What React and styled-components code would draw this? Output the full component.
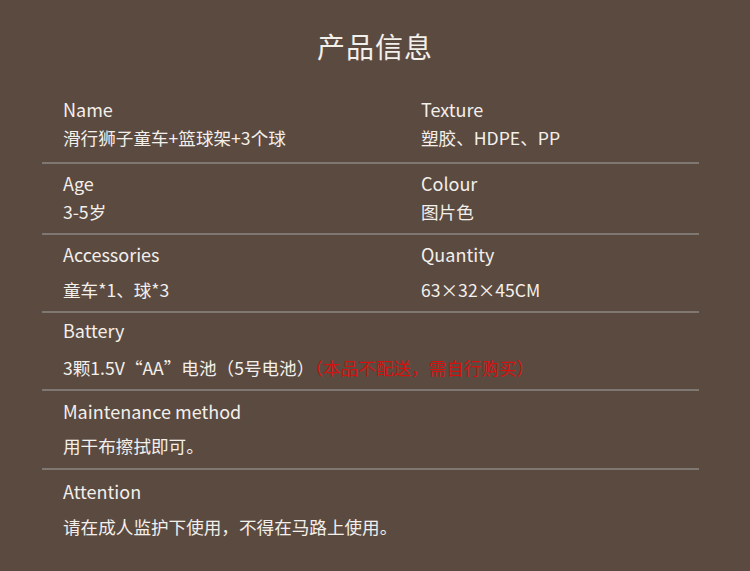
import React from 'react';
import styled, { createGlobalStyle } from 'styled-components';

const GlobalStyle = createGlobalStyle`
    html, body {
        margin: 0;
        padding: 0;
        background: #5b4a40;
    }
    body {
        font-family: "Noto Sans CJK SC", "Noto Sans", sans-serif;
        color: #f3efeb;
    }
`;

const Page = styled.div`
    width: 750px;
    height: 571px;
    overflow: hidden;
    background: #5b4a40;
    padding-top: 26px;
    box-sizing: border-box;
`;

const Title = styled.h1`
    margin: 0 0 22px;
    font-size: 28px;
    line-height: 40px;
    font-weight: 400;
    text-align: center;
    letter-spacing: 1px;
`;

const Table = styled.div`
    margin-left: 42px;
    width: 657px;
`;

const Row = styled.div`
    display: grid;
    grid-template-columns: 358px 1fr;
    padding: ${p => p.$pt}px 0 ${p => p.$pb}px 21px;
    border-top: ${p => (p.$first ? 'none' : '2px solid #7e7772')};
`;

const Cell = styled.div`
    display: flex;
    flex-direction: column;
    gap: ${p => p.$gap}px;
`;

const Label = styled.div`
    font-size: 18px;
    line-height: 24px;
`;

const Value = styled.div`
    font-size: 17.6px;
    line-height: 24px;
    white-space: nowrap;
`;

const Note = styled.span`
    color: #d3120e;
`;

const rows = [
    { pt: 9, pb: 12, gap: 5, cells: [['Name', '滑行狮子童车+篮球架+3个球'], ['Texture', '塑胶、HDPE、PP']] },
    { pt: 7, pb: 9, gap: 5, cells: [['Age', '3-5岁'], ['Colour', '图片色']] },
    { pt: 7, pb: 9, gap: 12, cells: [['Accessories', '童车*1、球*3'], ['Quantity', '63×32×45CM']] },
    {
        pt: 5,
        pb: 9,
        gap: 14,
        cells: [
            [
                'Battery',
                <>
                    3颗1.5V“AA”电池（5号电池）<Note>（本品不配送，需自行购买）</Note>
                </>,
            ],
        ],
    },
    { pt: 8, pb: 10, gap: 11, cells: [['Maintenance method', '用干布擦拭即可。']] },
    { pt: 9, pb: 10, gap: 12, cells: [['Attention', '请在成人监护下使用，不得在马路上使用。']] },
];

export default function App() {
    return (
        <Page>
            <GlobalStyle />
            <Title>产品信息</Title>
            <Table>
                {rows.map((row, i) => (
                    <Row key={i} $first={i === 0} $pt={row.pt} $pb={row.pb}>
                        {row.cells.map(([label, value]) => (
                            <Cell key={label} $gap={row.gap}>
                                <Label>{label}</Label>
                                <Value>{value}</Value>
                            </Cell>
                        ))}
                    </Row>
                ))}
            </Table>
        </Page>
    );
}
